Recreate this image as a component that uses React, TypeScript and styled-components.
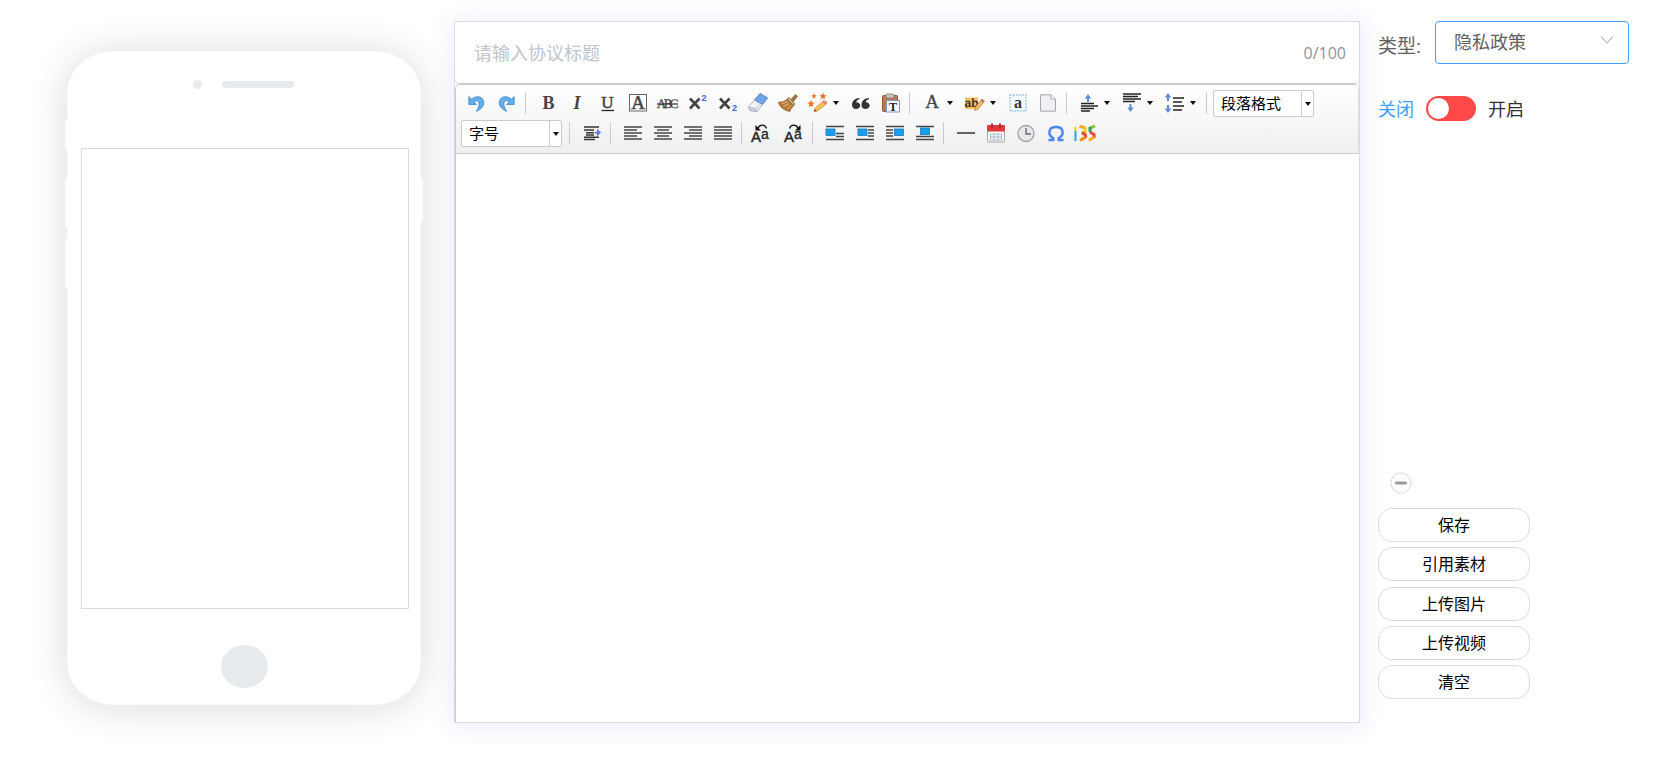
import React from 'react';
import styled, { createGlobalStyle, css } from 'styled-components';

const GlobalStyle = createGlobalStyle`
  *, *::before, *::after { box-sizing: border-box; }
  body {
    margin: 0;
    background: #fff;
    color: #303133;
    font-family: "Open Sans", "Noto Sans CJK SC", sans-serif;
    font-size: 18px;
  }
  button, input, select, textarea { font-family: inherit; margin: 0; }
`;

const Page = styled.main`
  display: flex;
  align-items: flex-start;
  min-height: 100vh;
  padding: 21px 37px 36px 67px;
`;

/* ---------- phone preview ---------- */

const Phone = styled.section`
  position: relative;
  flex: none;
  display: flex;
  flex-direction: column;
  width: 354px;
  margin: 30px 33px 0 0;
  padding: 0 12px 16px 13px;
  border: 1px solid #fbfbfb;
  border-radius: 46px / 42px;
  background: #fff;
  box-shadow: 0 2px 36px 3px rgba(0, 0, 0, 0.13);
`;

const SideKey = styled.span<{ $side: 'left' | 'right'; $top: number; $size: number }>`
  position: absolute;
  top: ${p => p.$top}px;
  ${p => p.$side}: -3px;
  width: 3px;
  height: ${p => p.$size}px;
  background: #fdfdfd;
  border-radius: ${p => (p.$side === 'left' ? '3px 0 0 3px' : '0 3px 3px 0')};
`;

const Sensors = styled.div`
  display: flex;
  align-items: center;
  justify-content: center;
  gap: 20px;
  height: 96px;
  padding: 0 2px 32px 0;
`;

const Camera = styled.span`
  width: 9px;
  height: 9px;
  border-radius: 50%;
  background: #e8ebee;
`;

const Speaker = styled.span`
  width: 72px;
  height: 7px;
  border-radius: 4px;
  background: #e8ebee;
`;

const Screen = styled.div`
  height: 461px;
  margin-right: -1px;
  border: 1px solid #d9dbe6;
`;

const HomeKey = styled.span`
  align-self: center;
  width: 47px;
  height: 43px;
  margin-top: 36px;
  border-radius: 50%;
  background: #e8ebee;
`;

/* ---------- editor ---------- */

const Editor = styled.section`
  flex: 1;
  min-width: 0;
  border: 1px solid #d9dbe6;
  background: #fff;
  box-shadow: 0 2px 20px 2px rgba(90, 90, 230, 0.13);
`;

const TitleRow = styled.div`
  display: flex;
  align-items: center;
  height: 62px;
  padding: 0 13px 0 19px;
  border-bottom: 1px solid #ccc;
  border-radius: 0 0 5px 5px;
`;

const TitleInput = styled.input`
  flex: 1;
  min-width: 0;
  height: 60px;
  padding: 0;
  border: 0;
  outline: 0;
  background: transparent;
  color: #606266;
  font-size: 18px;
  &::placeholder { color: #c0c4cc; opacity: 1; }
`;

const Counter = styled.span`
  color: #909399;
  font-size: 16px;
`;

const Toolbar = styled.div`
  padding: 3px 5px 5px;
  border: 1px solid #ccc;
  border-right-color: #dedede;
  border-radius: 5px 5px 0 0;
  background: linear-gradient(#fff, #efefef);
`;

const ToolRow = styled.div`
  display: flex;
  align-items: center;
  height: 30px;
`;

const ToolButton = styled.button<{ $menu?: boolean }>`
  flex: none;
  display: flex;
  align-items: center;
  width: ${p => (p.$menu ? 43 : 30)}px;
  height: 28px;
  padding: 0 2px 0 4px;
  border: 0;
  background: none;
  cursor: pointer;
  svg { display: block; flex: none; overflow: visible; }
  ${p => p.$menu && css`
    &::after {
      content: '';
      margin-left: 3px;
      border: 3px solid transparent;
      border-top: 4px solid #111;
      border-bottom: 0;
    }
  `}
`;

const Divider = styled.span`
  flex: none;
  width: 1px;
  height: 22px;
  margin: 0 6px 0 4px;
  background: #c9cbd2;
`;

const Combo = styled.span`
  position: relative;
  flex: none;
  width: 101px;
  height: 27px;
  margin-right: 3px;
  border: 1px solid #ccc;
  border-radius: 2px;
  background: #fff;
  &::before {
    content: '';
    position: absolute;
    top: 0;
    right: 11px;
    bottom: 0;
    border-left: 1px solid #ccc;
  }
  &::after {
    content: '';
    position: absolute;
    top: 11px;
    right: 2px;
    border: 3px solid transparent;
    border-top: 4px solid #111;
    border-bottom: 0;
  }
`;

const ComboSelect = styled.select`
  display: block;
  width: 100%;
  height: 25px;
  padding: 0 14px 0 7px;
  border: 0;
  outline: 0;
  appearance: none;
  background: transparent;
  color: #000;
  font-size: 15px;
`;

const Content = styled.textarea`
  display: block;
  width: 100%;
  height: 568px;
  padding: 8px;
  border: 0;
  border-left: 1px solid #ccc;
  outline: 0;
  resize: none;
  background: #fff;
  font-size: 16px;
`;

/* ---------- settings ---------- */

const Settings = styled.aside`
  flex: none;
  width: 251px;
  margin-left: 18px;
`;

const TypeRow = styled.div`
  display: flex;
  align-items: center;
  justify-content: space-between;
`;

const TypeLabel = styled.label`
  padding-top: 4px;
  color: #606266;
  font-size: 19px;
`;

const TypeBox = styled.span`
  position: relative;
  width: 194px;
  svg {
    position: absolute;
    top: 13px;
    right: 15px;
    pointer-events: none;
  }
`;

const TypeSelect = styled.select`
  display: block;
  width: 100%;
  height: 43px;
  padding: 0 40px 2px 18px;
  border: 1px solid #409eff;
  border-radius: 4px;
  outline: 0;
  appearance: none;
  background: #fff;
  color: #606266;
  font-size: 18px;
`;

const SwitchRow = styled.label`
  display: flex;
  align-items: center;
  gap: 12px;
  height: 28px;
  margin-top: 30px;
`;

const SwitchText = styled.span<{ $active?: boolean }>`
  color: ${p => (p.$active ? '#409eff' : '#303133')};
  font-size: 18px;
`;

const Switch = styled.input`
  flex: none;
  width: 50px;
  height: 25px;
  padding: 2px;
  border-radius: 13px;
  appearance: none;
  background: #ff4949;
  cursor: pointer;
  &::before {
    content: '';
    display: block;
    width: 21px;
    height: 21px;
    border-radius: 50%;
    background: #fff;
  }
  &:checked::before { margin-left: auto; }
`;

const Collapse = styled.button`
  display: block;
  margin: 350px 0 14px 12px;
  padding: 0;
  border: 0;
  background: none;
  cursor: pointer;
  svg { display: block; }
`;

const Actions = styled.div`
  display: flex;
  flex-direction: column;
  justify-content: space-between;
  width: 152px;
  height: 191px;
`;

const ActionButton = styled.button`
  height: 34px;
  padding: 0;
  border: 1px solid #dcdcdc;
  border-radius: 14px;
  background: #fff;
  color: #000;
  font-size: 16px;
  line-height: 32px;
  cursor: pointer;
`;

/* ---------- icons ---------- */

const SERIF = '"Liberation Serif", serif';
const SANS = '"Liberation Sans", sans-serif';

const Icon = ({ children }: { children: React.ReactNode }) => (
  <svg width="24" height="18" viewBox="-3 0 24 18" aria-hidden="true">{children}</svg>
);

type Line = [x1: number, x2: number, y: number];
const Lines = ({ rows, color = '#444' }: { rows: Line[]; color?: string }) => (
  <>
    {rows.map(([a, b, y]) => (
      <path key={`${a}-${y}`} d={`M${a} ${y}H${b}`} stroke={color} strokeWidth="1.5" />
    ))}
  </>
);

const undoShape = 'M.8 2.500V10.500H8.500L6 8C8 5.800 10.500 6.600 11 9 11.500 11.500 10.300 14 8.300 17.300 12.500 15.800 16 12.500 15.800 8.500 15.500 2.500 8.500.8 3.700 5.200Z';

const Undo = () => (
  <Icon><path d={undoShape} fill="#62aeea" stroke="#4189cd" strokeWidth=".8" /></Icon>
);
const Redo = () => (
  <Icon><path d={undoShape} transform="translate(17 0) scale(-1 1)" fill="#62aeea" stroke="#4189cd" strokeWidth=".8" /></Icon>
);
const Bold = () => (
  <Icon><text x="9.500" y="14.500" textAnchor="middle" fontFamily={SERIF} fontWeight="700" fontSize="18" fill="#444">B</text></Icon>
);
const Italic = () => (
  <Icon><text x="8" y="14.500" textAnchor="middle" fontFamily={SERIF} fontWeight="700" fontStyle="italic" fontSize="18" fill="#444">I</text></Icon>
);
const Underline = () => (
  <Icon>
    <text x="8.500" y="13.500" textAnchor="middle" fontFamily={SERIF} fontSize="17" fill="#444" stroke="#444" strokeWidth=".5">U</text>
    <path d="M2.500 16.500H15" stroke="#222" strokeWidth="1.300" />
  </Icon>
);
const Boxed = () => (
  <Icon>
    <rect x=".5" y=".5" width="17" height="16.500" fill="#fff" stroke="#666" />
    <text x="9" y="15" textAnchor="middle" fontFamily={SERIF} fontSize="19" fill="#444" stroke="#444" strokeWidth=".5">A</text>
  </Icon>
);
const Strike = () => (
  <Icon>
    <text x="8.500" y="14" textAnchor="middle" fontFamily={SERIF} fontSize="13" textRendering="geometricPrecision" fill="#444" stroke="#444" strokeWidth=".3">
      <tspan x="2.500">A</tspan><tspan x="9">B</tspan><tspan x="15">C</tspan>
    </text>
    <path d="M-2 10H19" stroke="#333" strokeWidth="1.200" />
  </Icon>
);
const Cross = () => <path d="M1 4.500 10.500 14.500M10.500 4.500 1 14.500" stroke="#444" strokeWidth="2.600" />;
const Super = () => (
  <Icon><Cross /><text x="12.500" y="7" fontFamily={SANS} fontWeight="700" fontSize="9" fill="#3567e0">2</text></Icon>
);
const Sub = () => (
  <Icon><Cross /><text x="13" y="17" fontFamily={SANS} fontWeight="700" fontSize="9" fill="#3567e0">2</text></Icon>
);
const Eraser = () => (
  <Icon>
    <path d="M-.5 13 11 -.5 18.500 4 8 17.500 1 16.500Z" fill="#f4f6fa" stroke="#98a0ae" strokeWidth=".8" />
    <path d="M5.500 6 11 -.5 18.500 4 13.500 10.500Z" fill="#6ea5ef" stroke="#4a80cf" strokeWidth=".8" />
    <path d="M-.5 13 7 14.500 8 17.500 1 16.500ZM7 14.500 13.500 7.500" fill="#cdd4df" stroke="#a5acb8" strokeWidth=".7" />
  </Icon>
);
const Broom = () => (
  <Icon>
    <path d="M12 5.500 16.500.5 18.500 2.300 14.500 7.500Z" fill="#b0753a" stroke="#84521f" strokeWidth=".7" />
    <path d="M8 5 10 3.500 16 10 14.500 12Z" fill="#c7b49a" stroke="#7c5a35" strokeWidth=".8" />
    <path d="M8 5C6 7.500 3 8.500 -.5 8 .5 13 5 16.500 11 17.500 11.500 15 13 13 14.500 12Z" fill="#b77a39" stroke="#85531f" strokeWidth=".7" />
    <path d="M3 9.500 8.500 7.500M4.500 12.500 10 9.500M8 15.500 12 11.500" stroke="#ecc48b" strokeWidth=".9" />
  </Icon>
);
const star = 'M0-3.500 1-1 3.500-.8 1.500.9 2.200 3.400 0 2-2.200 3.400-1.500.9-3.500-.8-1-1Z';
const Wand = () => (
  <Icon>
    {['translate(5 2) scale(.8)', 'translate(14 2)', 'translate(2 9.500) scale(1.100)', 'translate(17 8) scale(.4)'].map(t => (
      <path key={t} d={star} transform={t} fill="#f4702b" />
    ))}
    <path d="M5 17.500 6 14 15 6.500 18 9.500 8.500 17Z" fill="#f7bf5a" stroke="#c88c38" strokeWidth=".7" />
    <path d="M13 8 15 6.500 18 9.500 16.200 11Z" fill="#e78b7e" />
    <path d="M5 17.500 5.800 15 7.500 17Z" fill="#555" />
  </Icon>
);
const Quote = () => (
  <Icon>
    {[0, 9.5].map(x => (
      <path key={x} transform={`translate(${x} 0)`} d="M7.500 4C3 4 0 7 0 11 0 13.500 1.800 15 4 15S8.200 13.500 8.200 11.500 6.500 8.200 4.200 8.300C4.500 6.500 6 5.500 7.500 5Z" fill="#333" />
    ))}
  </Icon>
);
const Paste = () => (
  <Icon>
    <rect x=".5" y="1.500" width="15" height="16" rx="1" fill="#bd7b4c" stroke="#97592e" />
    <rect x="4" y="0" width="8" height="4" rx="1" fill="#c9c9c9" stroke="#777" strokeWidth=".8" />
    <rect x="4.500" y="6.500" width="13" height="11.500" fill="#f6f9ff" stroke="#7b98c8" />
    <text x="11" y="16.500" textAnchor="middle" fontFamily={SERIF} fontWeight="700" fontSize="12" fill="#222">T</text>
  </Icon>
);
const ForeColor = () => (
  <Icon><text x="9" y="14" textAnchor="middle" fontFamily={SERIF} fontSize="19" fill="#444" stroke="#444" strokeWidth=".3">A</text></Icon>
);
const BackColor = () => (
  <Icon>
    <rect x="-1" y="3.500" width="13" height="11.500" fill="#fbc05a" />
    <text x="5.500" y="13" textAnchor="middle" fontFamily={SANS} fontWeight="700" fontSize="12" textRendering="geometricPrecision" fill="#333">ab</text>
    <path d="M8.500 16.500 9.500 13 16 5 18.500 7.200 12 15.500Z" fill="#f1bd69" stroke="#ad7f3b" strokeWidth=".7" />
    <path d="M14.500 6.500 16 5 18.500 7.200 17 9Z" fill="#d8706a" />
  </Icon>
);
const SelectAll = () => (
  <Icon>
    <rect x="1" y="1" width="16" height="16" fill="#f4f8ff" stroke="#bcd6fb" strokeWidth="2" strokeDasharray="2 1" />
    <text x="9" y="13.500" textAnchor="middle" fontFamily={SERIF} fontWeight="700" fontSize="16" fill="#333">a</text>
  </Icon>
);
const Blank = () => (
  <Icon>
    <path d="M1.500.8H12L16.500 5V17.200H1.500Z" fill="#eef0f3" stroke="#a4a8ae" />
    <path d="M12 .8V5H16.500" fill="#fff" stroke="#a4a8ae" />
  </Icon>
);
const upArrow = 'M0 0 3.200 4.500H1V8H-1V4.500H-3.200Z';
const ParaTop = () => (
  <Icon>
    <path d={upArrow} transform="translate(8 0)" fill="#608bdc" />
    <Lines color="#222" rows={[[1, 14, 9.5], [1, 18, 12], [1, 14, 14.5], [1, 10, 17]]} />
  </Icon>
);
const ParaBottom = () => (
  <Icon>
    <Lines color="#222" rows={[[0, 18, 0], [0, 15, 2.5], [0, 18, 5], [0, 12, 7.5]]} />
    <path d={upArrow} transform="translate(7.500 18) scale(1 -1)" fill="#608bdc" />
  </Icon>
);
const LineHeight = () => (
  <Icon>
    <path d={upArrow} transform="translate(2 -1)" fill="#608bdc" />
    <path d={upArrow} transform="translate(2 19) scale(1 -1)" fill="#608bdc" />
    <Lines color="#222" rows={[[7, 18, 4], [7, 16, 8], [7, 18, 12], [7, 16, 16]]} />
  </Icon>
);
const Indent = () => (
  <Icon>
    <path d="M1 3H16M1 15.500H12M1 6H11M3 8.800H11M3 11H11M1 13.200H16" stroke="#333" strokeWidth="1.600" />
    <path d="M12 7.700H14V4.500L18 8.500 14 12.500V9.700H12Z" fill="#4d83ee" />
  </Icon>
);
const aligned = (short: [number, number], last: [number, number]) => () => (
  <Icon>
    <Lines rows={[[0, 18, 3], [short[0], short[1], 6], [0, 18, 9], [short[0], short[1], 12], [last[0], last[1], 15]]} />
  </Icon>
);
const AlignLeft = aligned([0, 13], [0, 18]);
const AlignCenter = aligned([3, 15], [0, 18]);
const AlignRight = aligned([5, 18], [0, 18]);
const AlignJustify = aligned([0, 18], [0, 18]);
const caseIcon = (x: number, d: string, head: string) => () => (
  <Icon>
    <g transform={`translate(${x} 0)`}>
      <text x="0" y="18" fontFamily={SANS} fontSize="15" fill="#222" stroke="#222" strokeWidth=".4">A</text>
      <text x="10" y="15" fontFamily={SANS} fontSize="14" fill="#222" stroke="#222" strokeWidth=".3">a</text>
      <path d={d} fill="none" stroke="#111" strokeWidth="1.300" />
      <path d={head} fill="#111" />
    </g>
  </Icon>
);
const ToUpper = caseIcon(-4, 'M7 4C9 0 14 0 15.500 4.500', 'M4.500 1V6.500H10Z');
const ToLower = caseIcon(-1, 'M5.500 4.500C7 0 12 0 14 4', 'M16.500 1V6.500H11Z');

const picture = (x: number, lines: Line[], y = 5) => () => (
  <Icon>
    <Lines rows={lines} />
    <rect x={x} y={y} width="9" height="6.500" fill="#18a0f0" stroke="#1479bd" strokeWidth=".8" />
  </Icon>
);
const FloatNone = picture(0, [[0, 18, 2.5], [10, 18, 9.5], [10, 18, 12.5], [0, 18, 15.5]]);
const FloatLeft = picture(2, [[0, 18, 2.5], [12, 18, 6], [12, 18, 9], [12, 18, 12], [0, 18, 15.5]]);
const FloatRight = picture(8.5, [[0, 18, 2.5], [0, 7, 6], [0, 7, 9], [0, 7, 12], [0, 18, 15.5]]);
const FloatCenter = picture(4.5, [[0, 18, 2.5], [0, 18, 12.5], [0, 18, 15.5]], 4);
const Rule = () => <Icon><path d="M0 9H18" stroke="#333" strokeWidth="1.500" /></Icon>;
const Calendar = () => (
  <Icon>
    <rect x=".5" y="2" width="17" height="16" rx="1" fill="#f7f7f7" stroke="#a5a5a5" />
    <rect x="0" y="1" width="18" height="6.500" rx="1" fill="#e2383b" />
    <path d="M5-.5V4M13-.5V4" stroke="#9b3437" strokeWidth="2" />
    <path d="M3 10H15M3 13H15M3 16H15M3.500 10V16M7 10V16M11 10V16M14.500 10V16" stroke="#9faec8" strokeWidth=".8" />
  </Icon>
);
const Clock = () => (
  <Icon>
    <circle cx="9" cy="9.500" r="8" fill="#e7e9ec" stroke="#9c9fa5" strokeWidth="1.300" />
    <path d="M9 4V10H14" fill="none" stroke="#666" strokeWidth="1.400" />
  </Icon>
);
const Omega = () => (
  <Icon>
    <path d="M1.500 16H6.200V14C.5 11 1 3 9 3S17.500 11 11.800 14V16H16.500" fill="none" stroke="#4b84ee" strokeWidth="2.400" />
  </Icon>
);
const Logo135 = () => (
  <Icon>
    <g fill="none" strokeWidth="3">
      <path d="M-1.500 3V7" stroke="#f5c61a" strokeWidth="2" /><path d="M-1.500 7V17" stroke="#26a7de" strokeWidth="2" />
      <path d="M2.500 2.500 8 3.500" stroke="#f1a52b" /><path d="M8 3V8L4.500 9" stroke="#f5c61a" />
      <path d="M5 8.500 8.500 11V14" stroke="#e54b35" /><path d="M8.500 13 3 16.500" stroke="#f58a1f" />
      <path d="M18 2 13 4" stroke="#8cc63e" /><path d="M13 3V8" stroke="#26a06a" />
      <path d="M13 8 17 10.500V14" stroke="#e54b35" /><path d="M17 13 12 16.500" stroke="#f5b21a" />
    </g>
  </Icon>
);

/* ---------- toolbar data ---------- */

type Tool = { label: string; icon: React.FC; menu?: boolean };
const tool = (label: string, icon: React.FC, menu = false): Tool => ({ label, icon, menu });

const firstRow: Tool[][] = [
  [tool('撤销', Undo), tool('重做', Redo)],
  [
    tool('加粗', Bold), tool('斜体', Italic), tool('下划线', Underline), tool('字符边框', Boxed),
    tool('删除线', Strike), tool('上标', Super), tool('下标', Sub), tool('清除格式', Eraser),
    tool('格式刷', Broom), tool('自动排版', Wand, true), tool('引用', Quote), tool('纯文本粘贴', Paste),
  ],
  [tool('字体颜色', ForeColor, true), tool('背景色', BackColor, true), tool('全选', SelectAll), tool('清空文档', Blank)],
  [tool('段前距', ParaTop, true), tool('段后距', ParaBottom, true), tool('行间距', LineHeight, true)],
];

const secondRow: Tool[][] = [
  [tool('首行缩进', Indent)],
  [tool('居左对齐', AlignLeft), tool('居中对齐', AlignCenter), tool('居右对齐', AlignRight), tool('两端对齐', AlignJustify)],
  [tool('字母大写', ToUpper), tool('字母小写', ToLower)],
  [tool('默认', FloatNone), tool('左浮动', FloatLeft), tool('右浮动', FloatRight), tool('居中', FloatCenter)],
  [tool('分隔线', Rule), tool('日期', Calendar), tool('时间', Clock), tool('特殊字符', Omega), tool('135编辑器', Logo135)],
];

const ToolGroup = ({ tools }: { tools: Tool[] }) => (
  <>
    {tools.map(({ label, icon: Glyph, menu }) => (
      <ToolButton key={label} type="button" aria-label={label} $menu={menu}><Glyph /></ToolButton>
    ))}
  </>
);

const actions = ['保存', '引用素材', '上传图片', '上传视频', '清空'];

export default function App() {
  return (
    <>
      <GlobalStyle />
      <Page>
        <Phone>
          <SideKey $side="left" $top={68} $size={30} />
          <SideKey $side="left" $top={126} $size={50} />
          <SideKey $side="left" $top={186} $size={50} />
          <SideKey $side="right" $top={126} $size={45} />
          <Sensors><Camera /><Speaker /></Sensors>
          <Screen />
          <HomeKey />
        </Phone>

        <Editor>
          <TitleRow>
            <TitleInput aria-label="协议标题" placeholder="请输入协议标题" maxLength={100} />
            <Counter>0/100</Counter>
          </TitleRow>
          <Toolbar>
            <ToolRow>
              {firstRow.map((tools, i) => (
                <React.Fragment key={i}><ToolGroup tools={tools} /><Divider /></React.Fragment>
              ))}
              <Combo>
                <ComboSelect aria-label="段落格式"><option>段落格式</option></ComboSelect>
              </Combo>
            </ToolRow>
            <ToolRow>
              <Combo>
                <ComboSelect aria-label="字号"><option>字号</option></ComboSelect>
              </Combo>
              {secondRow.map((tools, i) => (
                <React.Fragment key={i}><Divider /><ToolGroup tools={tools} /></React.Fragment>
              ))}
            </ToolRow>
          </Toolbar>
          <Content aria-label="协议内容" />
        </Editor>

        <Settings>
          <TypeRow>
            <TypeLabel htmlFor="type">类型:</TypeLabel>
            <TypeBox>
              <TypeSelect id="type"><option>隐私政策</option></TypeSelect>
              <svg width="14" height="14" viewBox="0 0 14 14" fill="none" stroke="#c0c4cc" strokeWidth="1.200" aria-hidden="true">
                <path d="M1 2.500 7 9 13 2.500" />
              </svg>
            </TypeBox>
          </TypeRow>
          <SwitchRow>
            <SwitchText $active>关闭</SwitchText>
            <Switch type="checkbox" role="switch" />
            <SwitchText>开启</SwitchText>
          </SwitchRow>
          <Collapse type="button" aria-label="收起">
            <svg width="22" height="22" viewBox="0 0 22 22" aria-hidden="true">
              <circle cx="11" cy="11" r="10" fill="#fff" stroke="#ccc" strokeDasharray="3 1" />
              <path d="M6.500 11H15.500" stroke="#999" strokeWidth="3" strokeLinecap="round" />
            </svg>
          </Collapse>
          <Actions>
            {actions.map(name => <ActionButton key={name} type="button">{name}</ActionButton>)}
          </Actions>
        </Settings>
      </Page>
    </>
  );
}
